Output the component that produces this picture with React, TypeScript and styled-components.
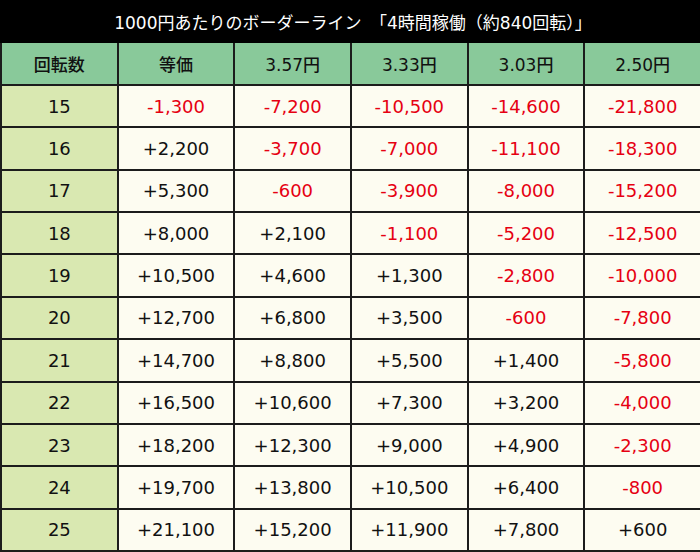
import { createGlobalStyle } from "styled-components";
import styled from "styled-components";

const GlobalStyle = createGlobalStyle`
  html, body {
    margin: 0;
    padding: 0;
    background: #000;
  }
  body {
    font-family: "DejaVu Sans", "Noto Sans CJK JP", sans-serif;
  }
`;

const Board = styled.div`
  width: 700px;
  height: 552px;
  display: flex;
  flex-direction: column;
  background: #1c1c1c;
`;

const Title = styled.div`
  height: 43px;
  flex: none;
  display: flex;
  align-items: center;
  justify-content: center;
  background: #000;
  color: #fff;
  font-size: 17px;
  padding: 0 0 1px 6px;
  box-sizing: border-box;
`;

const Grid = styled.div`
  flex: 1;
  display: grid;
  grid-template-columns: repeat(6, 1fr);
  grid-template-rows: 41px repeat(11, 1fr);
  gap: 2px;
  padding: 0 0 2px 2px;
  background: #1c1c1c;
`;

const HeadCell = styled.div`
  display: flex;
  align-items: center;
  justify-content: center;
  background: #89c99a;
  color: #111;
  font-size: 17px;
  font-weight: 500;
`;

const RowHead = styled.div`
  display: flex;
  align-items: center;
  justify-content: center;
  background: #d9e8b1;
  color: #111;
  font-size: 18px;
`;

const Cell = styled.div<{ $minus: boolean }>`
  display: flex;
  align-items: center;
  justify-content: center;
  background: #fdfcf1;
  color: ${(p) => (p.$minus ? "#e60012" : "#111")};
  font-size: 18px;
`;

const headers = ["回転数", "等価", "3.57円", "3.33円", "3.03円", "2.50円"];

const rows: [number, string[]][] = [
  [15, ["-1,300", "-7,200", "-10,500", "-14,600", "-21,800"]],
  [16, ["+2,200", "-3,700", "-7,000", "-11,100", "-18,300"]],
  [17, ["+5,300", "-600", "-3,900", "-8,000", "-15,200"]],
  [18, ["+8,000", "+2,100", "-1,100", "-5,200", "-12,500"]],
  [19, ["+10,500", "+4,600", "+1,300", "-2,800", "-10,000"]],
  [20, ["+12,700", "+6,800", "+3,500", "-600", "-7,800"]],
  [21, ["+14,700", "+8,800", "+5,500", "+1,400", "-5,800"]],
  [22, ["+16,500", "+10,600", "+7,300", "+3,200", "-4,000"]],
  [23, ["+18,200", "+12,300", "+9,000", "+4,900", "-2,300"]],
  [24, ["+19,700", "+13,800", "+10,500", "+6,400", "-800"]],
  [25, ["+21,100", "+15,200", "+11,900", "+7,800", "+600"]],
];

export default function App() {
  return (
    <>
      <GlobalStyle />
      <Board>
        <Title>1000円あたりのボーダーライン　「4時間稼働（約840回転）」</Title>
        <Grid>
          {headers.map((h) => (
            <HeadCell key={h}>{h}</HeadCell>
          ))}
          {rows.map(([spins, values]) => [
            <RowHead key={`r${spins}`}>{spins}</RowHead>,
            ...values.map((v, i) => (
              <Cell key={`${spins}-${i}`} $minus={v.startsWith("-")}>
                {v}
              </Cell>
            )),
          ])}
        </Grid>
      </Board>
    </>
  );
}
